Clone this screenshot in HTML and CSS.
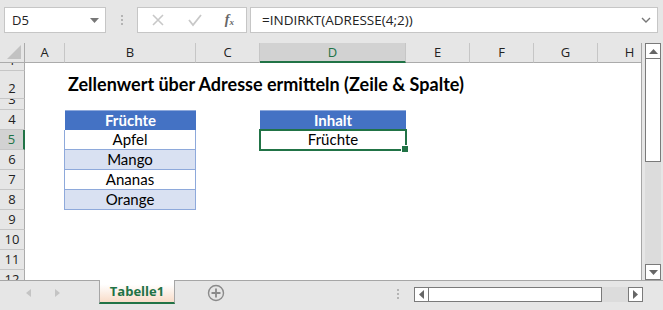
FILE: index.html
```html
<!DOCTYPE html>
<html lang="de">
<head>
    <meta charset="UTF-8">
    <title>Tabelle1</title>
    <link rel="stylesheet" href="styles.css">
</head>
<body>
    <div class="app">
        <div class="fbar">
            <div class="namebox">
                <span>D5</span>
                <svg width="9" height="5" viewBox="0 0 9 5"><path d="M0 0h9L4.5 5z" fill="#777"/></svg>
            </div>
            <div class="grip"><i></i><i></i><i></i></div>
            <div class="fbtns">
                <svg width="14" height="14" viewBox="0 0 14 14"><path d="M2 2l10 10M12 2L2 12" stroke="#c8c8c8" stroke-width="1.6"/></svg>
                <svg width="16" height="14" viewBox="0 0 16 14"><path d="M2 7l4 5L14 2" stroke="#c8c8c8" stroke-width="1.8" fill="none"/></svg>
                <span class="fx">f<sub>x</sub></span>
            </div>
            <div class="finput">
                <span>=INDIRKT(ADRESSE(4;2))</span>
                <svg width="10" height="6" viewBox="0 0 10 6"><path d="M1 1l4 4 4-4" stroke="#777" stroke-width="1.4" fill="none"/></svg>
            </div>
        </div>

        <div class="main">
            <div class="sheet">
                <div class="corner"><svg width="14" height="14" viewBox="0 0 14 14"><path d="M14 0v14H0z" fill="#c2c2c2"/></svg></div>
                <div class="ch">A</div>
                <div class="ch">B</div>
                <div class="ch">C</div>
                <div class="ch sel">D</div>
                <div class="ch">E</div>
                <div class="ch">F</div>
                <div class="ch">G</div>
                <div class="ch">H</div>

                <div class="rh clip">1</div>
                <div class="c"></div><div class="c"></div><div class="c"></div><div class="c"></div><div class="c"></div><div class="c"></div><div class="c"></div><div class="c"></div>

                <div class="rh">2</div>
                <div class="c"></div>
                <div class="c title">Zellenwert über Adresse ermitteln (Zeile &amp; Spalte)</div>
                <div class="c"></div><div class="c"></div><div class="c"></div><div class="c"></div><div class="c"></div><div class="c"></div>

                <div class="rh clip">3</div>
                <div class="c"></div><div class="c"></div><div class="c"></div><div class="c"></div><div class="c"></div><div class="c"></div><div class="c"></div><div class="c"></div>

                <div class="rh">4</div>
                <div class="c"></div>
                <div class="c th">Früchte</div>
                <div class="c"></div>
                <div class="c th">Inhalt</div>
                <div class="c"></div><div class="c"></div><div class="c"></div><div class="c"></div>

                <div class="rh sel">5</div>
                <div class="c"></div>
                <div class="c td">Apfel</div>
                <div class="c"></div>
                <div class="c active">Früchte</div>
                <div class="c"></div><div class="c"></div><div class="c"></div><div class="c"></div>

                <div class="rh">6</div>
                <div class="c"></div>
                <div class="c td band">Mango</div>
                <div class="c"></div><div class="c"></div><div class="c"></div><div class="c"></div><div class="c"></div><div class="c"></div>

                <div class="rh">7</div>
                <div class="c"></div>
                <div class="c td">Ananas</div>
                <div class="c"></div><div class="c"></div><div class="c"></div><div class="c"></div><div class="c"></div><div class="c"></div>

                <div class="rh">8</div>
                <div class="c"></div>
                <div class="c td band">Orange</div>
                <div class="c"></div><div class="c"></div><div class="c"></div><div class="c"></div><div class="c"></div><div class="c"></div>

                <div class="rh">9</div>
                <div class="c"></div><div class="c"></div><div class="c"></div><div class="c"></div><div class="c"></div><div class="c"></div><div class="c"></div><div class="c"></div>
                <div class="rh">10</div>
                <div class="c"></div><div class="c"></div><div class="c"></div><div class="c"></div><div class="c"></div><div class="c"></div><div class="c"></div><div class="c"></div>
                <div class="rh">11</div>
                <div class="c"></div><div class="c"></div><div class="c"></div><div class="c"></div><div class="c"></div><div class="c"></div><div class="c"></div><div class="c"></div>
                <div class="rh">12</div>
                <div class="c"></div><div class="c"></div><div class="c"></div><div class="c"></div><div class="c"></div><div class="c"></div><div class="c"></div><div class="c"></div>
            </div>

            <div class="vscroll">
                <div class="sbtn"><svg width="9" height="5" viewBox="0 0 9 5"><path d="M4.5 0L9 5H0z" fill="#666"/></svg></div>
                <div class="vthumb"></div>
                <div class="vtrack"></div>
                <div class="sbtn"><svg width="9" height="5" viewBox="0 0 9 5"><path d="M0 0h9L4.5 5z" fill="#666"/></svg></div>
            </div>
        </div>

        <div class="tabbar">
            <div class="tabnav">
                <svg width="5" height="8" viewBox="0 0 5 8"><path d="M5 0v8L0 4z" fill="#c4c4c4"/></svg>
                <svg width="5" height="8" viewBox="0 0 5 8"><path d="M0 0v8l5-4z" fill="#c4c4c4"/></svg>
            </div>
            <div class="tab">Tabelle1</div>
            <div class="addsheet">
                <svg width="18" height="18" viewBox="0 0 18 18"><circle cx="9" cy="9" r="7.5" fill="none" stroke="#8a8a8a" stroke-width="1.4"/><path d="M9 4.5v9M4.5 9h9" stroke="#8a8a8a" stroke-width="1.8"/></svg>
            </div>
            <div class="grip hgrip"><i></i><i></i><i></i></div>
            <div class="hscroll">
                <div class="sbtn"><svg width="5" height="9" viewBox="0 0 5 9"><path d="M5 0v9L0 4.5z" fill="#666"/></svg></div>
                <div class="hthumb"></div>
                <div class="htrack"></div>
                <div class="sbtn"><svg width="5" height="9" viewBox="0 0 5 9"><path d="M0 0v9l5-4.5z" fill="#666"/></svg></div>
            </div>
        </div>
    </div>
</body>
</html>
```

FILE: styles.css
```css
*{
    margin: 0;
    padding: 0;
    box-sizing: border-box;
}
body{
    background: #e6e6e6;
    font-family: "Open Sans", "Liberation Sans", sans-serif;
}
.app{
    width: 663px;
    height: 310px;
    overflow: hidden;
    display: flex;
    flex-direction: column;
}

/* formula bar */
.fbar{
    height: 43px;
    display: flex;
    padding: 7px 5px 0 4px;
    gap: 0;
}
.namebox, .fbtns, .finput{
    height: 26px;
    background: #fff;
    border: 1px solid #c6c6c6;
    display: flex;
    align-items: center;
}
.namebox{
    width: 102px;
    padding: 0 6px 0 7px;
    justify-content: space-between;
    font-size: 13px;
    color: #222;
}
.grip{
    width: 31px;
    display: flex;
    flex-direction: column;
    align-items: center;
    justify-content: center;
    gap: 2px;
    height: 26px;
}
.grip i{
    width: 2px;
    height: 2px;
    background: #b4b4b4;
}
.fbtns{
    width: 110px;
    padding: 0 12px 0 13px;
    justify-content: space-between;
}
.fx{
    font-family: "Liberation Serif", serif;
    font-style: italic;
    font-weight: bold;
    font-size: 14px;
    color: #666;
}
.fx sub{
    font-size: 9px;
    vertical-align: -1px;
}
.finput{
    margin-left: 3px;
    flex: 1;
    padding: 0 6px 0 11px;
    justify-content: space-between;
    font-size: 13.5px;
    color: #222;
}

/* grid */
.main{
    height: 237px;
    display: flex;
}
.sheet{
    width: 642px;
    height: 237px;
    overflow: hidden;
    background: #fff;
    border-right: 1px solid #a6a6a6;
    display: grid;
    grid-template-columns: 25px 40px 131px 64px 146px 64px 64px 64px 64px;
    grid-template-rows: 20px 8px 28px 11px repeat(9, 20px);
    font-family: "Lato", "Liberation Sans", sans-serif;
}
.corner{
    background: #e6e6e6;
    border-right: 1px solid #ababab;
    border-bottom: 1px solid #ababab;
    display: flex;
    align-items: flex-end;
    justify-content: flex-end;
    padding: 0 3px 3px 0;
}
.ch{
    background: #e6e6e6;
    border-right: 1px solid #c6c6c6;
    border-bottom: 1px solid #ababab;
    text-align: center;
    font-family: "Open Sans", sans-serif;
    font-size: 13px;
    line-height: 19px;
    color: #222;
}
.ch.sel{
    background: #d2d2d2;
    color: #217346;
    border-bottom: 2px solid #217346;
}
.rh{
    background: #e6e6e6;
    border-right: 1px solid #ababab;
    border-bottom: 1px solid #c6c6c6;
    text-align: center;
    font-family: "Open Sans", sans-serif;
    font-size: 13px;
    color: #222;
    display: flex;
    align-items: flex-end;
    justify-content: center;
    line-height: 19px;
    overflow: hidden;
}
.rh.clip{
    align-items: flex-end;
}
.rh.sel{
    background: #d2d2d2;
    color: #217346;
    border-right: 2px solid #217346;
}
.c{
    font-size: 15px;
    line-height: 19px;
    white-space: nowrap;
    color: #000;
}
.title{
    font-weight: bold;
    font-size: 18px;
    line-height: 27px;
    padding-left: 3px;
    position: relative;
    z-index: 1;
}
.th{
    background: #4472c4;
    color: #fff;
    font-weight: bold;
    text-align: center;
    border-top: 1px solid #8ea9db;
}
.td{
    text-align: center;
    border-right: 1px solid #8ea9db;
    border-bottom: 1px solid #8ea9db;
    box-shadow: -1px 0 0 #8ea9db;
}
.td.band{
    background: #d9e1f2;
}
.active{
    text-align: center;
    position: relative;
    outline: 2px solid #217346;
    outline-offset: -1px;
}
.active::after{
    content: "";
    position: absolute;
    right: -3px;
    bottom: -3px;
    width: 6px;
    height: 6px;
    background: #217346;
    border: 1px solid #fff;
}

/* scrollbars */
.vscroll{
    margin-left: 3px;
    width: 16px;
    display: flex;
    flex-direction: column;
    background: #dcdcdc;
}
.sbtn{
    width: 16px;
    height: 16px;
    background: #fff;
    border: 1px solid #7a7a7a;
    display: flex;
    align-items: center;
    justify-content: center;
    flex: none;
}
.vthumb{
    height: 103px;
    background: #fff;
    border: 1px solid #7a7a7a;
    border-top: 0;
}
.vtrack{
    flex: 1;
}

/* tab bar */
.tabbar{
    height: 30px;
    border-top: 1px solid #a6a6a6;
    display: flex;
    align-items: flex-start;
}
.tabnav{
    width: 99px;
    display: flex;
    gap: 24px;
    padding: 8px 0 0 26px;
}
.tab{
    width: 76px;
    height: 24px;
    margin-top: -1px;
    background: linear-gradient(#fff 20%, #f8dcc8);
    border-left: 1px solid #a6a6a6;
    border-right: 1px solid #a6a6a6;
    border-bottom: 2px solid #217346;
    color: #217346;
    font-weight: bold;
    font-size: 13px;
    text-align: center;
    line-height: 23px;
    font-family: "Open Sans", sans-serif;
}
.addsheet{
    width: 83px;
    padding: 3px 0 0 32px;
}
.hgrip{
    width: 32px;
    height: 26px;
    margin-left: 124px;
}
.hscroll{
    margin-top: 6px;
    width: 229px;
    height: 15px;
    display: flex;
    background: #dcdcdc;
}
.hscroll .sbtn{
    width: 15px;
    height: 15px;
}
.hthumb{
    width: 173px;
    background: #fff;
    border: 1px solid #7a7a7a;
    border-left: 0;
}
.htrack{
    flex: 1;
}
```
